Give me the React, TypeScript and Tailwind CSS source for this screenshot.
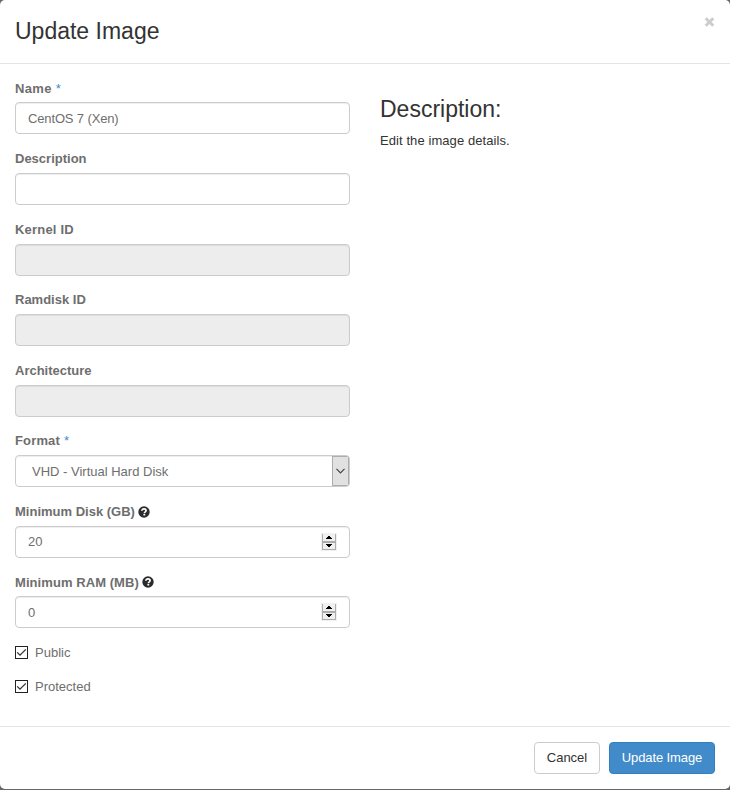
import React from "react";

const inputBase =
  "flex h-8 w-full items-center rounded-[4px] border border-[#ccc] px-3 text-[#6e6e6e] shadow-[inset_0_1px_1px_rgba(0,0,0,0.075)]";

function Help() {
  return (
    <svg width="12" height="12" viewBox="0 0 12 12" className="-mt-[1.5px] ml-[3.5px]">
      <circle cx="6" cy="6" r="5.7" fill="#2b2b2b" />
      <path d="M3.9 4.8C3.9 3.4 4.8 2.8 6 2.8s2.1.7 2.1 1.8C8.1 5.9 6.4 5.8 6.4 7.2" fill="none" stroke="#fff" strokeWidth="1.7" />
      <rect x="5.4" y="8" width="1.8" height="1.5" fill="#fff" />
    </svg>
  );
}

function Field({
  label,
  spacing = "",
  required,
  help,
  children,
}: {
  label: string;
  spacing?: string;
  required?: boolean;
  help?: boolean;
  children: React.ReactNode;
}) {
  return (
    <div className="mb-[15px]">
      <div className="mb-[5px] flex h-[18.58px] items-center pt-[1.35px] font-bold text-[#6e6e6e]">
        <span className={spacing}>{label}</span>
        {required && <span className="ml-1 font-normal text-[#428bca]">*</span>}
        {help && <Help />}
      </div>
      {children}
    </div>
  );
}

function Spinner() {
  return (
    <svg width="16" height="18" viewBox="0 0 16 18" shapeRendering="crispEdges" className="ml-auto">
      <rect width="16" height="18" fill="#f0f0f0" />
      <path d="M1.5 1v16M14.5 1v16M1 16.5h14" stroke="#adadad" />
      <path d="M1 9h14" stroke="#adadad" strokeWidth="2" />
      <path d="M7 3h2v1h1v1h1v1H5V5h1V4h1zM5 11h6v1h-1v1H9v1H7v-1H6v-1H5z" fill="#000" />
    </svg>
  );
}

function Check({ label }: { label: string }) {
  return (
    <label className="flex h-[19px] items-center text-[#6e6e6e]">
      <svg width="13" height="13" viewBox="0 0 13 13" className="mr-[7px]">
        <rect x=".5" y=".5" width="12" height="12" fill="#fff" stroke="#222" />
        <path d="M2.2 6.4 5 9.2l5.8-5.8" fill="none" stroke="#333" strokeWidth="1.3" />
      </svg>
      <span>{label}</span>
    </label>
  );
}

export default function App() {
  return (
    <div className="h-[790px] w-[730px] bg-[#666] pb-px font-['Liberation_Sans',Arial,sans-serif] text-[13px] leading-[18.57px] text-[#333]">
      <div className="flex h-[789px] flex-col overflow-hidden rounded-[5px] bg-white">
        <header className="flex h-16 justify-between border-b border-[#e5e5e5] px-[15px]">
          <h1 className="mt-[18px] text-[23px] leading-[26px]">Update Image</h1>
          <button aria-label="Close" className="mt-[17px] h-[10px]">
            <svg width="11" height="10" viewBox="0 0 11 10">
              <path d="M1.7 1.2 9.3 8.8M9.3 1.2 1.7 8.8" stroke="#ccc" strokeWidth="3" />
            </svg>
          </button>
        </header>
        <main className="flex h-[662px] gap-[30px] px-[15px] pt-[14.87px]">
          <form className="w-[335px]">
            <Field label="Name" spacing="tracking-[0.35px]" required>
              <div className={`${inputBase} pt-[1.5px]`}>
                <span className="tracking-[-0.14px]">CentOS 7 (Xen)</span>
              </div>
            </Field>
            <Field label="Description">
              <div className={inputBase} />
            </Field>
            <Field label="Kernel ID" spacing="tracking-[0.2px]">
              <div className={`${inputBase} bg-[#ededed]`} />
            </Field>
            <Field label="Ramdisk ID">
              <div className={`${inputBase} bg-[#ededed]`} />
            </Field>
            <Field label="Architecture">
              <div className={`${inputBase} bg-[#ededed]`} />
            </Field>
            <Field label="Format" spacing="tracking-[0.15px]" required>
              <div className="flex h-8 w-full items-center overflow-hidden rounded-[4px] border border-[#ccc] pl-4 text-[#6e6e6e] shadow-[inset_0_1px_1px_rgba(0,0,0,0.075)]">
                <span className="pt-[1.5px]">VHD - Virtual Hard Disk</span>
                <div className="ml-auto flex h-[30px] w-[17px] items-center justify-center border border-[#adadad] bg-[#e1e1e1]">
                  <svg width="9" height="6" viewBox="0 0 9 6">
                    <path d="M.5.8 4.5 4.8 8.5.8" fill="none" stroke="#444" strokeWidth="1.2" />
                  </svg>
                </div>
              </div>
            </Field>
            <Field label="Minimum Disk (GB)" help>
              <div className={inputBase}>
                <span className="pt-[1.5px]">20</span>
                <Spinner />
              </div>
            </Field>
            <Field label="Minimum RAM (MB)" spacing="tracking-[0.07px]" help>
              <div className={inputBase}>
                <span className="pt-[1.5px]">0</span>
                <Spinner />
              </div>
            </Field>
            <div className="flex flex-col gap-[15px]">
              <Check label="Public" />
              <Check label="Protected" />
            </div>
          </form>
          <section className="flex-1">
            <h2 className="mt-[17px] text-[23px] leading-[26px]">Description:</h2>
            <p className="mt-[10px] tracking-[0.08px]">Edit the image details.</p>
          </section>
        </main>
        <footer className="flex flex-1 justify-end gap-[9px] border-t border-[#e5e5e5] px-[15px] pt-[15px]">
          <button className="h-8 w-[66px] rounded-[4px] border border-[#ccc] bg-white">Cancel</button>
          <button className="h-8 w-[106px] rounded-[4px] border border-[#357ebd] bg-[#428bca] tracking-[-0.1px] text-white">Update Image</button>
        </footer>
      </div>
    </div>
  );
}
